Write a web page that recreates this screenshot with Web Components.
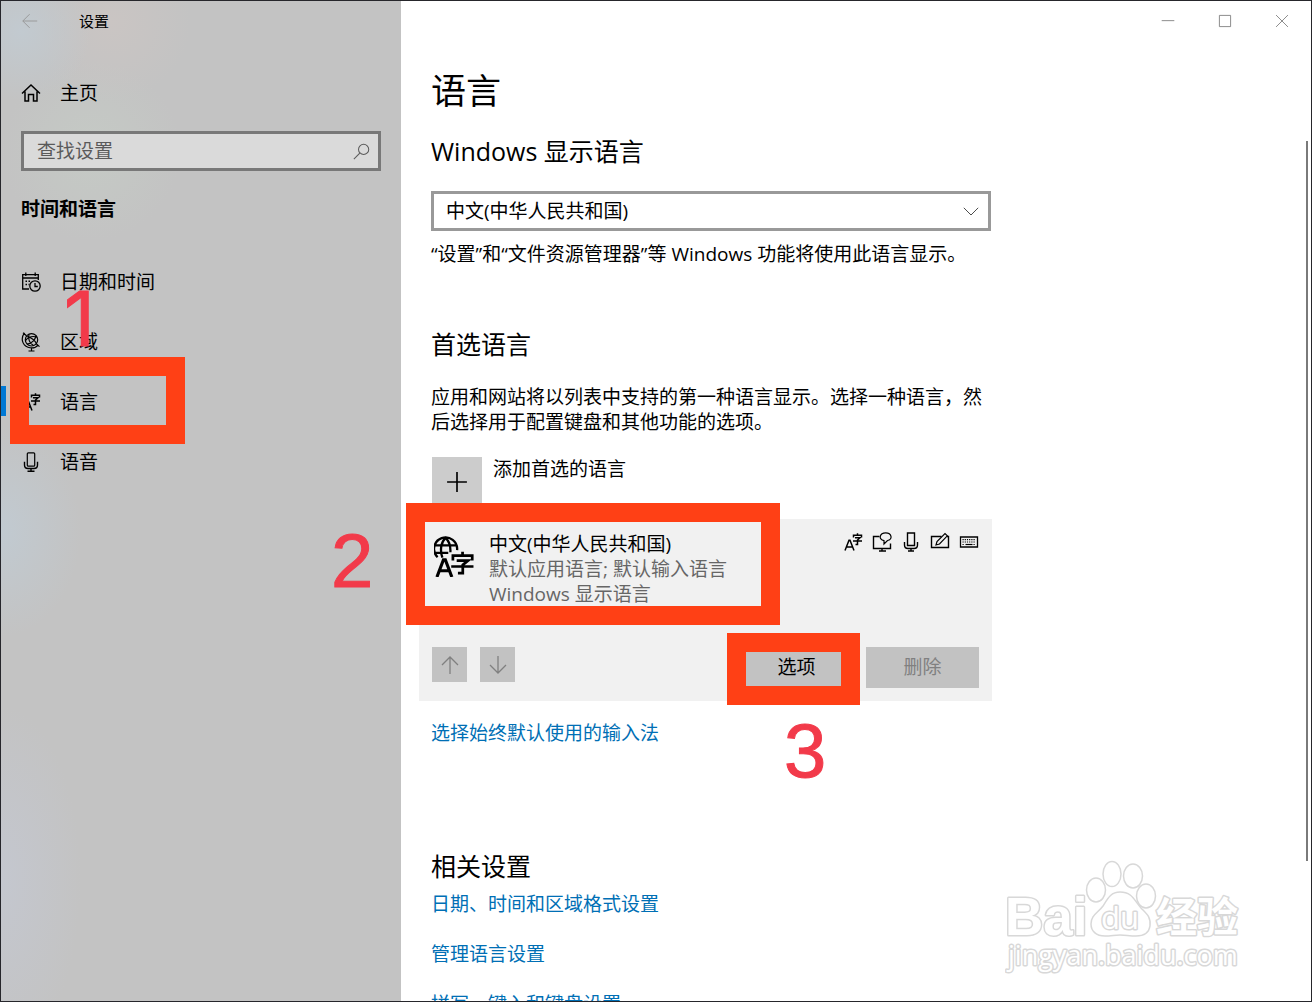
<!DOCTYPE html>
<html lang="zh-CN">

<head>
    <meta charset="UTF-8">
    <meta name="viewport" content="width=device-width, initial-scale=1.0">
    <title>设置</title>
    <style>
        body {
            margin: 0;
            font: 19px/25px "Open Sans", "Noto Sans CJK SC", sans-serif;
            color: #000;
        }
        .mark-nav { inset: -15px auto -12px 9px; width: 137px; }
        .mark-lang { inset: -16px auto 76px -13px; width: 336px; }
        .mark-options { inset: -14px -7px -17px -13px; }
        .num-1 { left: 63px; top: -96px; --mark-font: Inter; }
        .num-2 { left: -88px; top: 0; }
        .num-3 { left: 44px; top: 62px; }
    </style>

<template id="settings-window-template">
    <style>
        :host {
            display: grid;
            grid-template: minmax(0, 1fr) / 400px minmax(0, 1fr);
            position: relative;
            box-sizing: border-box;
            height: 100vh;
            overflow: hidden;
            border: 1px solid #26262b;
            background: #fff;
        }
        aside {
            background:
                radial-gradient(circle at 20px 30px, #c2cad0 0, transparent 70px),
                radial-gradient(circle at 110px 20px, #cac5c3 0, transparent 80px),
                radial-gradient(circle at 90px 150px, #c5cac5 0, transparent 90px),
                radial-gradient(ellipse at 0 530px, #c1cad1 0, transparent 80px),
                radial-gradient(ellipse at 0 880px, #c4c7cf 0, transparent 80px),
                #c3c3c3;
        }
        main {
            position: relative;
            min-width: 0;
        }
        .content {
            max-width: 560px;
            padding: 30px 30px 0;
        }
        .thumb {
            position: absolute;
            right: 3px;
            top: 14%;
            height: 72%;
            width: 2px;
            background: #7a7a7a;
        }
    </style>
    <aside><slot name="side"></slot></aside>
    <main>
        <slot name="controls"></slot>
        <div class="content"><slot></slot></div>
        <div class="thumb"></div>
    </main>
    <slot name="watermark"></slot>
</template>

<template id="app-title-template">
    <style>
        :host { display: flex; align-items: center; height: 40px; font-size: 15px; }
        button {
            display: flex; align-items: center; justify-content: center;
            width: 58px; height: 40px; padding: 0; border: 0;
            background: none; color: #999;
        }
        span { padding-left: 20px; }
    </style>
    <button aria-label="返回" disabled><ui-icon name="back" size="16"></ui-icon></button>
    <span><slot></slot></span>
</template>

<template id="window-controls-template">
    <style>
        :host { display: flex; justify-content: flex-end; height: 40px; padding-right: 1px; }
        button {
            display: flex; align-items: center; justify-content: center;
            width: 57px; padding: 0; border: 0;
            background: none; color: #777;
        }
    </style>
    <button aria-label="最小化"><ui-icon name="min" size="14"></ui-icon></button>
    <button aria-label="最大化"><ui-icon name="max" size="14"></ui-icon></button>
    <button aria-label="关闭"><ui-icon name="close" size="14"></ui-icon></button>
</template>

<template id="nav-item-template">
    <style>
        :host { display: block; position: relative; }
        a {
            display: flex; align-items: center; gap: 19px;
            height: 60px; padding-left: 20px;
            color: inherit; text-decoration: none;
        }
        :host([current])::before {
            content: ""; position: absolute;
            left: 0; top: 14px; width: 5px; height: 30px;
            background: #0078d4;
        }
    </style>
    <a href="#"><ui-icon size="20"></ui-icon><slot></slot></a>
    <slot name="mark"></slot>
</template>

<template id="search-box-template">
    <style>
        :host { display: block; margin: 8px 20px 26px; }
        label {
            display: flex; align-items: center;
            box-sizing: border-box; height: 40px; padding: 0 8px 0 13px;
            border: 3px solid #787878; background: #dadada; color: #5a5a5a;
        }
        input {
            flex: 1; min-width: 0; padding: 0; border: 0; outline: 0;
            background: none; font: inherit; color: inherit;
        }
        input::placeholder { color: #5a5a5a; opacity: 1; }
    </style>
    <label><input type="text" placeholder="查找设置" aria-label="查找设置"><ui-icon name="search" size="17"></ui-icon></label>
</template>

<template id="section-title-template">
    <style>
        :host { display: block; }
        h1, h2 { margin: 0; font-weight: 400; }
        h1 { font-size: 35px; line-height: 40px; }
        h2 { font-size: 25px; line-height: 30px; }
        h2.side { font-size: 19px; line-height: 25px; font-weight: 700; }
    </style>
</template>

<template id="language-select-template">
    <style>
        :host { display: grid; align-items: center; margin: 25px 0 11px; }
        select, ui-icon { grid-area: 1 / 1; }
        select {
            appearance: none; width: 100%; height: 40px; padding: 0 40px 0 12px;
            border: 3px solid #999; border-radius: 0; background: #fff;
            font: inherit; color: #000;
        }
        ui-icon { justify-self: end; margin-right: 12px; color: #444; pointer-events: none; }
    </style>
    <select aria-label="Windows 显示语言"><option>中文(中华人民共和国)</option></select>
    <ui-icon name="chevron" size="16"></ui-icon>
</template>

<template id="add-language-template">
    <style>
        :host { display: block; margin: 22px 0 12px; }
        button {
            display: flex; gap: 11px; padding: 0; border: 0;
            background: none; font: inherit; color: inherit;
        }
        .plus {
            display: flex; align-items: center; justify-content: center;
            width: 50px; height: 50px; margin-left: 1px; background: #ccc;
        }
    </style>
    <button><span class="plus"><ui-icon name="plus" size="22"></ui-icon></span><slot></slot></button>
</template>

<template id="language-card-template">
    <style>
        :host {
            display: block; position: relative; box-sizing: border-box;
            margin: 0 -1px 0 -12px; padding: 13px; background: #f1f1f1;
        }
        .top { display: flex; align-items: flex-start; min-height: 115px; }
        .globe { margin: 3px 13px 0 2px; }
        .text { flex: 1; }
        .name { display: block; }
        .note { color: #666; }
        .features { display: flex; gap: 9px; }
        .bottom { display: flex; align-items: flex-start; gap: 13px; }
        .bottom > :nth-child(2) { margin-right: auto; }
    </style>
    <div class="top">
        <ui-icon class="globe" name="language" size="42"></ui-icon>
        <div class="text"><slot name="name" class="name"></slot><div class="note"><slot></slot></div></div>
        <div class="features">
            <ui-icon name="display" size="20"></ui-icon>
            <ui-icon name="tts" size="20"></ui-icon>
            <ui-icon name="mic" size="20"></ui-icon>
            <ui-icon name="pen" size="20"></ui-icon>
            <ui-icon name="keyboard" size="20"></ui-icon>
        </div>
    </div>
    <div class="bottom">
        <flat-button small label="上移" disabled><ui-icon name="up" size="20"></ui-icon></flat-button>
        <flat-button small label="下移" disabled><ui-icon name="down" size="20"></ui-icon></flat-button>
        <slot name="actions"></slot>
    </div>
    <slot name="mark"></slot>
</template>

<template id="flat-button-template">
    <style>
        :host { display: block; position: relative; }
        button {
            display: flex; align-items: center; justify-content: center;
            width: 113px; height: 41px; padding: 0; border: 0;
            background: #c2c2c2; font: inherit; color: inherit;
        }
        button:disabled { color: #808080; }
        :host([small]) button { width: 35px; height: 35px; }
    </style>
    <button><slot></slot></button>
    <slot name="mark"></slot>
</template>

<template id="setting-link-template">
    <style>
        :host { display: block; }
        a { color: #006fb5; text-decoration: none; }
    </style>
    <a href="#"><slot></slot></a>
</template>

<template id="help-text-template">
    <style>
        :host { display: block; }
        p { margin: 0; }
    </style>
    <p><slot></slot></p>
</template>

<template id="mark-box-template">
    <style>
        :host {
            position: absolute; z-index: 1;
            border: 19px solid #ff4015; pointer-events: none;
        }
    </style>
</template>

<template id="mark-number-template">
    <style>
        :host {
            position: absolute; z-index: 2; pointer-events: none;
            font: 76px/84px var(--mark-font, "Liberation Sans"), sans-serif;
            color: #f23a4a; -webkit-text-stroke: 1px #f23a4a;
        }
    </style>
    <slot></slot>
</template>

<template id="baidu-watermark-template">
    <style>
        :host { position: absolute; right: 66px; bottom: 22px; pointer-events: none; }
        svg { display: block; fill: #fff; stroke: #d8d8d8; stroke-width: 1.5; }
        text { paint-order: stroke; stroke-linejoin: round; stroke-width: 3; font-family: "Open Sans", "Noto Sans CJK SC", sans-serif; }
        .brand { font-family: "Liberation Sans", sans-serif; }
    </style>
    <svg width="240" height="120" viewBox="0 0 240 120">
        <text class="brand" x="0" y="76" font-size="53" font-weight="700">Bai</text>
        <path d="M115 33c12 0 14 8 21 16 6 6 10 9 9 18-1 7-6 10-14 10-6 0-11-1-16-1s-9 1-15 1c-9 0-14-5-14-12 0-9 7-11 12-18 5-8 8-14 17-14z"/>
        <ellipse cx="91" cy="31" rx="9.500" ry="12"/>
        <ellipse cx="107" cy="15" rx="9" ry="12.500"/>
        <ellipse cx="128" cy="17" rx="9.500" ry="12"/>
        <ellipse cx="141" cy="37" rx="9.500" ry="12"/>
        <text x="96" y="70" font-size="31">du</text>
        <text x="151" y="73" font-size="41" font-weight="700">经验</text>
        <text x="3" y="106" font-size="27" stroke-width="2">jingyan.baidu.com</text>
    </svg>
</template>

<script>
    const icons = {
        back: '<path d="M1 10h18M9.500 1.500L1 10l8.500 8.500"/>',
        min: '<path d="M1 9.500h18"/>',
        max: '<path d="M2 2h16v16H2z"/>',
        close: '<path d="M1.500 1.500l17 17m0-17l-17 17"/>',
        home: '<path d="M1 10.500L10 2l9 8.500M4 8.500V18h3.500v-6.500h5V18H16V8.500" stroke-width="1.500"/>',
        search: '<circle cx="12.500" cy="7.500" r="6"/><path d="M8 12l-7 7"/>',
        calendar: '<path d="M8 17H1.700V2.700h15.600V8M1.700 6h15.600M4.800.5v3.500M14.200.5v3.500" stroke-width="1.300"/><path d="M4.500 9.300h6M4.500 12.500h4" stroke-width="1.500" stroke-dasharray="1.500 1.500"/><circle cx="14" cy="14" r="5.200" stroke-width="1.300"/><path d="M14 11v3.500h2.800" stroke-width="1.300"/>',
        region: '<g stroke-width="1.200"><circle cx="10.500" cy="7.800" r="6.200"/><path d="M3.500.8C-.5 6 1 13 7 15.200c4 1.400 8 .3 10.300-2.400M2 .8l3.500 3M15.500 12l3 2.600M10.500 15.500v3.300M7.500 19h6M5.600 4.500c4 .5 8.400 3.600 10 7.500M15 3.500c-.5 4-4 8-9 8.600M8 2.500c-.8 4.500 1 9 4.500 11M4.500 8.500C7.500 5 12 3.800 16 5.200"/></g>',
        speech: '<rect x="6.300" y=".8" width="7.400" height="13.400" rx="1"/><path d="M3.500 9.800V13q0 3.500 3.500 3.500h6q3.500 0 3.500-3.500V9.800M10 16.500V19M6.500 19.200h7" stroke-width="1.400"/>',
        display: '<path d="M2 18.500L6 8.200h1l4 10.300M3.500 15h6" stroke-width="1.500"/><path d="M10.500 5.500V3.200h8v2.300M14.500 1.200v2M12 5.800h5l-2.500 2.200v4.500h-2M10 9h9" stroke-width="1.500"/>',
        tts: '<path d="M7.500 4.500h-6v12H18.500v-5M7 19h7M10 16.500v2.500" stroke-width="1.400"/><path d="M12 8.700C6 7.500 7.500.8 13.700.8s7.300 7 1.800 7.700L12 12z" stroke-width="1.200"/>',
        mic: '<path d="M6.500 1h7v12.500h-7zM3.500 10v3q0 3.500 3.500 3.500h6q3.500 0 3.500-3.500v-3M10 16.500V19M7 19h6" stroke-width="1.400"/>',
        pen: '<path d="M11.500 4.500H1.500v11h17v-11H17" stroke-width="1.400"/><path d="M6 13l1-3.500L15 1.500l2.300 2.300L9.500 12z" stroke-width="1.200"/>',
        keyboard: '<path d="M1.500 5h17v10h-17z" stroke-width="1.300"/><path d="M3.500 7.700h13M3.500 10h13M3.500 12.500h2M14.500 12.500h2" stroke-width="1.200" stroke-dasharray="1.200 1"/><path d="M6.500 12.500h7"/>',
        language: '<path d="M1.700 10.600A5.500 5.500 0 1 1 11 7.200M.3 4.900h10M.3 8.500h6.500M4 10.800C2.800 7.500 3.200 3.500 5.500 1.400 7.500 3.300 8 5.300 7.800 8.200" stroke-width="1.100"/><path d="M1.400 20L4.500 11.800h.9L8.500 20M2.500 17h4.900" stroke-width="1.500"/><path d="M9 12.200V9.800h9.200v2.400M13.600 8v1.800M10.800 12.200h5.400l-2.500 2v4h-2.300M8.200 15h10.600" stroke-width="1.300"/>',
        chevron: '<path d="M1 6l9 9 9-9"/>',
        plus: '<path d="M10 1v18M1 10h18" stroke-width="1.500"/>',
        up: '<path d="M10 19V2M2 10l8-8 8 8" stroke-width="1.300"/>',
        down: '<path d="M10 1v17M2 10l8 8 8-8" stroke-width="1.300"/>'
    }

    // every element starts from the template that carries its name
    class BaseElement extends HTMLElement {
        constructor() {
            super();
            let template = document.getElementById(this.localName + "-template")
            let shadowRoot = this.attachShadow({ mode: "open" });
            shadowRoot.appendChild(template.content.cloneNode(true));
        }
    }

    class UiIcon extends HTMLElement {
        static observedAttributes = ["name"]

        constructor() {
            super();
            this.attachShadow({ mode: "open" });
        }

        connectedCallback() {
            this.draw()
        }

        attributeChangedCallback() {
            this.draw()
        }

        draw() {
            let size = this.getAttribute("size") || 20
            this.shadowRoot.innerHTML = `
                <style>
                    :host { display: block; flex: none; }
                    svg { display: block; fill: none; stroke: currentColor; stroke-width: 1.2; }
                </style>
                <svg width="${size}" height="${size}" viewBox="0 0 20 20" aria-hidden="true">${icons[this.getAttribute("name")] || ""}</svg>`
        }
    }
    customElements.define("ui-icon", UiIcon)

    class NavItem extends BaseElement {
        connectedCallback() {
            this.shadowRoot.querySelector("ui-icon").setAttribute("name", this.getAttribute("icon"))
        }
    }

    class SectionTitle extends BaseElement {
        connectedCallback() {
            let heading = document.createElement(this.getAttribute("level") === "1" ? "h1" : "h2")
            if (this.hasAttribute("side")) heading.className = "side"
            heading.appendChild(document.createElement("slot"))
            this.shadowRoot.appendChild(heading)
        }
    }

    class FlatButton extends BaseElement {
        connectedCallback() {
            let button = this.shadowRoot.querySelector("button")
            button.disabled = this.hasAttribute("disabled")
            if (this.hasAttribute("label")) button.setAttribute("aria-label", this.getAttribute("label"))
        }
    }

    document.addEventListener("DOMContentLoaded", function () {
        customElements.define("nav-item", NavItem)
        customElements.define("section-title", SectionTitle)
        customElements.define("flat-button", FlatButton)
        let plain = ["settings-window", "app-title", "window-controls", "search-box", "language-select",
            "add-language", "language-card", "setting-link", "help-text", "mark-box", "mark-number", "baidu-watermark"]
        for (let name of plain) {
            customElements.define(name, class extends BaseElement {})
        }
    })
</script>
    <style>
        /* vertical rhythm between the blocks of the page */
        .home { margin-top: 22px; }
        .side-title { margin: 0 20px 30px; }
        .display-title { margin-top: 25px; }
        .preferred-title { margin: 62px 0 26px; }
        .ime-link { margin-top: 20px; }
        .related-title { margin: 105px 0 11px; }
        .next-link { margin-top: 25px; }
    </style>
</head>

<body>
    <settings-window>
        <div slot="side">
            <app-title>设置</app-title>
            <nav-item class="home" icon="home">主页</nav-item>
            <search-box></search-box>
            <section-title side class="side-title">时间和语言</section-title>
            <nav>
                <nav-item icon="calendar">日期和时间</nav-item>
                <nav-item icon="region">区域</nav-item>
                <nav-item icon="display" current>语言
                    <mark-box slot="mark" class="mark-nav"></mark-box>
                    <mark-number slot="mark" class="num-1">1</mark-number>
                </nav-item>
                <nav-item icon="speech">语音</nav-item>
            </nav>
        </div>
        <window-controls slot="controls"></window-controls>

        <section-title level="1">语言</section-title>
        <section-title class="display-title">Windows 显示语言</section-title>
        <language-select></language-select>
        <help-text>“设置”和“文件资源管理器”等 Windows 功能将使用此语言显示。</help-text>

        <section-title class="preferred-title">首选语言</section-title>
        <help-text>应用和网站将以列表中支持的第一种语言显示。选择一种语言，然后选择用于配置键盘和其他功能的选项。</help-text>
        <add-language>添加首选的语言</add-language>
        <language-card>
            <span slot="name">中文(中华人民共和国)</span>
            默认应用语言; 默认输入语言<br>Windows 显示语言
            <flat-button slot="actions">选项
                <mark-box slot="mark" class="mark-options"></mark-box>
                <mark-number slot="mark" class="num-3">3</mark-number>
            </flat-button>
            <flat-button slot="actions" disabled>删除</flat-button>
            <mark-box slot="mark" class="mark-lang"></mark-box>
            <mark-number slot="mark" class="num-2">2</mark-number>
        </language-card>
        <setting-link class="ime-link">选择始终默认使用的输入法</setting-link>

        <section-title class="related-title">相关设置</section-title>
        <setting-link>日期、时间和区域格式设置</setting-link>
        <setting-link class="next-link">管理语言设置</setting-link>
        <setting-link class="next-link">拼写、键入和键盘设置</setting-link>

        <baidu-watermark slot="watermark"></baidu-watermark>
    </settings-window>
</body>

</html>
